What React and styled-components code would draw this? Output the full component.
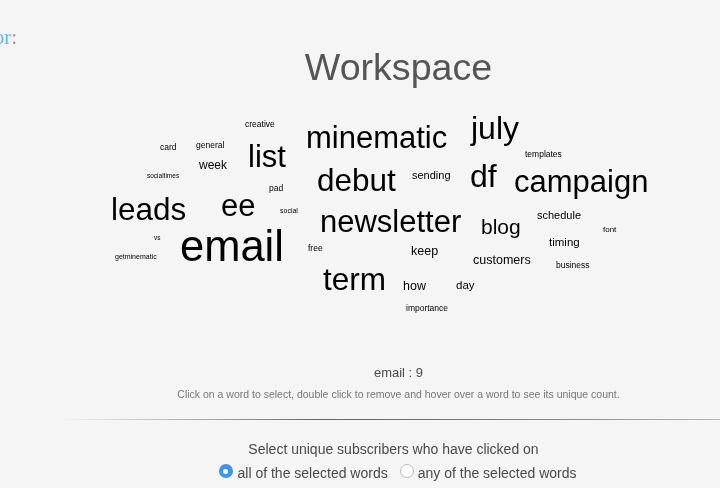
import React from 'react'
import styled, { createGlobalStyle } from 'styled-components'

const GlobalStyle = createGlobalStyle`
  html, body {
    margin: 0;
    height: 100%;
    overflow: hidden;
    background: #f5f5f5;
  }
`
const Page = styled.div`
  position: relative;
  width: 720px;
  height: 488px;
  overflow: hidden;
  background: #f5f5f5;
  font-family: "Liberation Sans", Arial, sans-serif;
`
const Logo = styled.div`
  position: absolute;
  right: 703px;
  top: 25px;
  font-family: "Liberation Serif", serif;
  font-size: 21px;
  line-height: 24px;
  color: #5fb6f5;
  white-space: nowrap;
  filter: blur(0.5px);
  span {
    color: #999;
  }
`
const Main = styled.div`
  display: flex;
  flex-direction: column;
  align-items: center;
  padding: 44px 0 0 77px;
`
const Title = styled.h1`
  margin: 0;
  font-size: 37.6px;
  font-weight: normal;
  line-height: 46px;
  color: #555;
  filter: blur(0.3px);
`
const Cloud = styled.div`
  position: relative;
  align-self: stretch;
  margin-left: -77px;
  height: 275px;
`
const Word = styled.span`
  position: absolute;
  left: ${p => p.$x}px;
  top: ${p => p.$y - 90}px;
  font-size: ${p => p.$size}px;
  line-height: 1;
  color: #000;
  white-space: nowrap;
  transform: translateY(-50%);
  filter: blur(0.4px);
`
const Count = styled.div`
  font-size: 13px;
  line-height: 16px;
  color: #4a4a4a;
  filter: blur(0.3px);
`
const Hint = styled.div`
  margin-top: 6px;
  font-size: 10.5px;
  line-height: 14px;
  color: #777;
  filter: blur(0.3px);
`
const Rule = styled.hr`
  align-self: stretch;
  height: 1px;
  margin: 18px 0 0 -17px;
  border: 0;
  background: linear-gradient(to right, rgba(90, 90, 90, 0), #666 40%, #888 75%, rgba(120, 120, 120, 0.5));
`
const Question = styled.div`
  margin: 21px 10px 0 0;
  font-size: 14px;
  line-height: 16px;
  color: #4a4a4a;
  filter: blur(0.3px);
`
const Options = styled.div`
  display: flex;
  gap: 12px;
  margin: 8px 2px 0 0;
`
const Option = styled.label`
  display: flex;
  align-items: center;
  gap: 4px;
  font-size: 14px;
  line-height: 16px;
  color: #4a4a4a;
  filter: blur(0.3px);
`
const Radio = styled.span`
  box-sizing: border-box;
  width: 14px;
  height: 14px;
  margin: -4px ${p => (p.$on ? '1px' : '0')} 0 0;
  border-radius: 50%;
  background: ${p => (p.$on ? '#3d94ec' : '#fff')};
  border: ${p => (p.$on ? '0' : '1px solid #bbb')};
  display: flex;
  align-items: center;
  justify-content: center;
  &::after {
    content: '';
    display: ${p => (p.$on ? 'block' : 'none')};
    width: 5px;
    height: 5px;
    border-radius: 50%;
    background: #fff;
  }
`

const words = [
  ['creative', 245, 124, 8.5],
  ['card', 160, 147, 8.5],
  ['general', 196, 145, 8.5],
  ['week', 199, 165, 12],
  ['socialtimes', 147, 176, 6.5],
  ['list', 248, 156, 31],
  ['minematic', 306, 137, 31],
  ['july', 471, 128, 32],
  ['templates', 525, 154, 8.5],
  ['debut', 317, 181, 31.5],
  ['sending', 412, 175, 11],
  ['df', 470, 176, 32],
  ['campaign', 514, 181, 31],
  ['pad', 269, 188, 8.5],
  ['social', 280, 210, 7],
  ['leads', 111, 210, 31.5],
  ['ee', 221, 205, 31],
  ['newsletter', 320, 221, 31],
  ['blog', 481, 226, 21],
  ['schedule', 537, 215, 11],
  ['font', 603, 230, 8],
  ['vs', 154, 238, 6.5],
  ['email', 180, 247, 43.5],
  ['free', 308, 248, 8.5],
  ['getminematic', 115, 256, 7],
  ['timing', 549, 243, 11.5],
  ['keep', 411, 251, 12.5],
  ['customers', 473, 260, 12.5],
  ['business', 556, 265, 8.5],
  ['term', 323, 280, 31.5],
  ['how', 403, 286, 12.5],
  ['day', 456, 286, 11.5],
  ['importance', 406, 308, 8.5],
]

export default function App() {
  return (
    <Page>
      <GlobalStyle />
      <Logo>Editor<span>:</span></Logo>
      <Main>
        <Title>Workspace</Title>
        <Cloud>
          {words.map(([text, x, y, size]) => (
            <Word key={text} $x={x} $y={y} $size={size}>{text}</Word>
          ))}
        </Cloud>
        <Count>email : 9</Count>
        <Hint>Click on a word to select, double click to remove and hover over a word to see its unique count.</Hint>
        <Rule />
        <Question>Select unique subscribers who have clicked on</Question>
        <Options>
          <Option><Radio $on />all of the selected words</Option>
          <Option><Radio />any of the selected words</Option>
        </Options>
      </Main>
    </Page>
  )
}
